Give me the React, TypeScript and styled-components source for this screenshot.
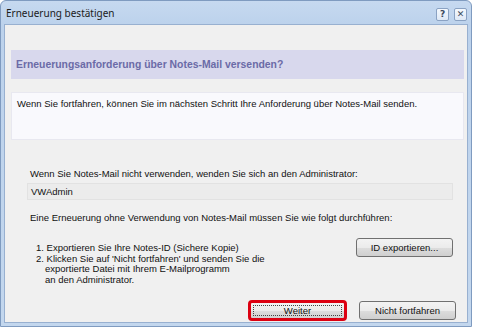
import styled, { createGlobalStyle } from "styled-components";

const GlobalStyle = createGlobalStyle`
  html, body {
    margin: 0;
    padding: 0;
    background: #ffffff;
  }
  body {
    font-family: "Liberation Sans", Arial, sans-serif;
  }
`;

const Window = styled.div`
  width: 472px;
  height: 327px;
  box-sizing: border-box;
  border: 1px solid #7f9bc0;
  border-radius: 6px 6px 0 0;
  background: linear-gradient(180deg, #c6d9f0 0px, #bcd2ec 24px, #c3d7ee 100%);
  padding: 0 3px 3px;
  display: flex;
  flex-direction: column;
`;

const TitleBar = styled.div`
  height: 23px;
  display: flex;
  align-items: center;
  justify-content: space-between;
  padding: 0 1px 0 2px;
`;

const Caption = styled.span`
  font-family: "Noto Sans", "Open Sans", sans-serif;
  font-size: 10px;
  color: #1b1b1b;
`;

const CaptionButtons = styled.div`
  display: flex;
  gap: 5px;
  margin-top: 3px;
`;

const CaptionButton = styled.div`
  width: 13px;
  height: 13px;
  box-sizing: border-box;
  border: 1px solid #8aa2c3;
  border-radius: 2px;
  background: linear-gradient(180deg, #f4f8fd 0%, #dfe9f6 100%);
  display: flex;
  align-items: center;
  justify-content: center;
  font-family: "DejaVu Sans", sans-serif;
  font-weight: bold;
  font-size: 9px;
  color: #3b4a5e;
  line-height: 1;
`;

const Body = styled.div`
  flex: 1;
  background: #f0f0f0;
  border: 1px solid #98b0d0;
  padding: 25px 3px 0 6px;
  display: flex;
  flex-direction: column;
  font-size: 9.5px;
  color: #111111;
`;

const Banner = styled.div`
  height: 29px;
  line-height: 29px;
  padding-left: 5px;
  background: #d8d8ed;
  color: #6b6ba7;
  font-weight: bold;
  font-size: 10.4px;
`;

const MessageBox = styled.div`
  margin-top: 13px;
  height: 48px;
  box-sizing: border-box;
  padding: 5px 5px;
  background: #f9f9fd;
  border: 1px solid #e8e8f0;
  line-height: 12px;
`;

const Section = styled.div`
  margin-left: 19px;
  margin-right: 11px;
  display: flex;
  flex-direction: column;
`;

const Line = styled.div<{ $gap: number }>`
  margin-top: ${({ $gap }) => $gap}px;
  line-height: 12px;
`;

const Field = styled.div`
  margin: 3px 0 0 -3px;
  height: 17px;
  box-sizing: border-box;
  padding-left: 3px;
  line-height: 15px;
  background: #ececec;
  border: 1px solid #e2e2e2;
`;

const StepsRow = styled.div`
  margin-top: 14px;
  display: flex;
  justify-content: space-between;
  align-items: flex-start;
`;

const Steps = styled.ol`
  margin: 5px 0 0 6px;
  padding: 0;
  list-style: none;
  line-height: 10.7px;
`;

const Step = styled.li`
  padding-left: 9px;
  text-indent: -9px;
`;

const Button = styled.button<{ $focused?: boolean }>`
  position: relative;
  width: 97px;
  height: 19px;
  box-sizing: border-box;
  border: 1px solid #707070;
  border-radius: 3px;
  background: linear-gradient(180deg, #f3f3f3 0%, #ebebeb 50%, #dddddd 51%, #cfcfcf 100%);
  font-family: "Liberation Sans", Arial, sans-serif;
  font-size: 9.5px;
  color: #111111;
  padding: 0;
  ${({ $focused }) =>
    $focused &&
    `
    outline: 3px solid #dc0011;
    outline-offset: -2px;
    &::before {
      content: "";
      position: absolute;
      inset: 3px;
      border: 1px dotted #444444;
    }
  `}
`;

const ButtonRow = styled.div`
  margin-top: auto;
  margin-bottom: 2px;
  margin-right: 8px;
  display: flex;
  justify-content: flex-end;
  gap: 13px;
`;

export default function App() {
  return (
    <>
      <GlobalStyle />
      <Window>
        <TitleBar>
          <Caption>Erneuerung bestätigen</Caption>
          <CaptionButtons>
            <CaptionButton>?</CaptionButton>
            <CaptionButton>✕</CaptionButton>
          </CaptionButtons>
        </TitleBar>
        <Body>
          <Banner>Erneuerungsanforderung über Notes-Mail versenden?</Banner>
          <MessageBox>
            Wenn Sie fortfahren, können Sie im nächsten Schritt Ihre Anforderung über Notes-Mail senden.
          </MessageBox>
          <Section>
            <Line $gap={28}>
              Wenn Sie Notes-Mail nicht verwenden, wenden Sie sich an den Administrator:
            </Line>
            <Field>VWAdmin</Field>
            <Line $gap={12}>
              Eine Erneuerung ohne Verwendung von Notes-Mail müssen Sie wie folgt durchführen:
            </Line>
            <StepsRow>
              <Steps>
                <Step>1. Exportieren Sie Ihre Notes-ID (Sichere Kopie)</Step>
                <Step>
                  2. Klicken Sie auf 'Nicht fortfahren' und senden Sie die
                  <br />
                  exportierte Datei mit Ihrem E-Mailprogramm
                  <br />
                  an den Administrator.
                </Step>
              </Steps>
              <Button>ID exportieren...</Button>
            </StepsRow>
          </Section>
          <ButtonRow>
            <Button $focused>Weiter</Button>
            <Button>Nicht fortfahren</Button>
          </ButtonRow>
        </Body>
      </Window>
    </>
  );
}
